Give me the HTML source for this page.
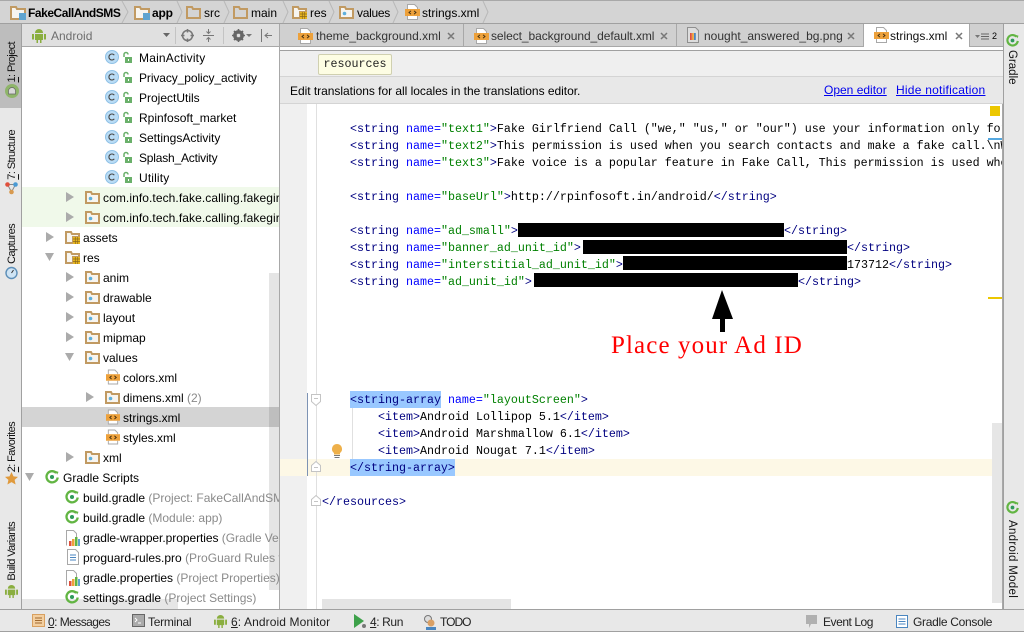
<!DOCTYPE html>
<html><head><meta charset="utf-8"><style>
html,body{margin:0;padding:0;width:1024px;height:633px;overflow:hidden;background:#fff}
body{position:relative;font-family:"Liberation Sans",sans-serif;font-size:12px;color:#000}
.a,.t,.b,svg.i{position:absolute}
.t{white-space:nowrap;line-height:20px;height:20px}
.r{margin-top:1px}
.g{color:#8a8a8a}
.b{white-space:nowrap;line-height:20px;height:20px;font-size:12px;color:#222}
.v{position:absolute;writing-mode:vertical-rl;transform:rotate(180deg);white-space:nowrap;font-size:11px;line-height:14px;letter-spacing:-.6px;color:#111}
.vr{position:absolute;writing-mode:vertical-rl;white-space:nowrap;font-size:11.5px;line-height:14px;color:#111}
svg.i{overflow:visible}
.l{position:absolute;left:350px;height:17px;line-height:17px;white-space:pre;font-family:"Liberation Mono",monospace;font-size:11.67px;color:#000}
.n{color:#000080}.c{color:#0000ff}.s{color:#008000}
.k{position:absolute;background:#000}
</style></head><body>
<svg width="0" height="0" style="position:absolute"><defs>
<symbol id="fo" viewBox="0 0 15 13"><path d="M1 12V1h5l1 2h7v9z" fill="#f7f5f0" stroke="#c19a62" stroke-width="2"/><circle cx="5.500" cy="7.500" r="1.800" fill="#5fb0dc"/></symbol>
<symbol id="fr" viewBox="0 0 15 13"><path d="M1 12V1h5l1 2h7v3H8v6z" fill="#f7f5f0" stroke="#c19a62" stroke-width="2"/><path d="M8 6h7v7H8z" fill="#e9b61f"/><path d="M8 8h7M8 10.500h7M10.300 6v7M12.700 6v7" stroke="#8a6a1a" stroke-width=".7"/></symbol>
<symbol id="fp" viewBox="0 0 16 14"><path d="M1 13V1h5l1 2h8v10z" fill="#f7f5f0" stroke="#c19a62" stroke-width="2"/><path d="M9 7h7v7H9z" fill="#5fa4d0"/></symbol>
<symbol id="fe" viewBox="0 0 15 13"><path d="M1 12V1h5l1 2h7v9z" fill="none" stroke="#c19a62" stroke-width="2"/></symbol>
<symbol id="x" viewBox="0 0 15 16"><path d="M2.500 5V.5h7l3 3V5M2.500 12v3.500h10V12" fill="#fff" stroke="#a8a8a8"/><path d="M0 5h15v7H0z" fill="#eda13b"/><path d="M6 6.800L4 8.500l2 1.700M9 6.800l2 1.700-2 1.700" fill="none" stroke="#3b2a10" stroke-width=".9"/></symbol>
<symbol id="cl" viewBox="0 0 28 15"><circle cx="7" cy="7" r="6.500" fill="#b9dcf5" stroke="#8fc1e6"/><path d="M9.300 5.200A3 3 0 1 0 9.300 8.800" fill="none" stroke="#444" stroke-width="1.100"/><path d="M19 7V4.500a2 2 0 0 1 4 0" fill="none" stroke="#6ab06a" stroke-width="1.500"/><path d="M20 7h7v6h-7z" fill="#6ab06a"/><path d="M23 9h1v2h-1z" fill="#fff"/></symbol>
<symbol id="gr" viewBox="0 0 15 15"><path d="M12 3.100A6 6 0 1 0 13.600 8" fill="none" stroke="#62b543" stroke-width="2.500"/><circle cx="7.500" cy="7.500" r="2.200" fill="#2f9a5a"/><path d="M11 1l3.500 1-1.500 3z" fill="#62b543"/></symbol>
<symbol id="an" viewBox="0 0 14 15"><path d="M3 5a4 4 0 0 1 8 0z" fill="#8aae3f"/><path d="M3 6h8v6h-1.500v3h-1.500v-3H6v3H4.500v-3H3zM0 6h2v5.500H0zM12 6h2v5.500h-2z" fill="#8aae3f"/></symbol>
<symbol id="ch" viewBox="0 0 14 16"><path d="M.5 15.500V.5h7l3 3V7" fill="#fff" stroke="#a8a8a8"/><path d="M3 11h2.500v5H3z" fill="#e0503c"/><path d="M6 9h2.500v7H6z" fill="#eda13b"/><path d="M9 7h2.500v9H9z" fill="#62b543"/><path d="M12 9h2v7h-2z" fill="#5fa4d0"/></symbol>
<symbol id="tx" viewBox="0 0 12 16"><path d="M.5.500h8l3 3v12H.5z" fill="#fff" stroke="#a8a8a8"/><path d="M3 6h6M3 8.500h6M3 11h6" stroke="#4a86c0"/></symbol>
</defs></svg>

<!-- breadcrumb -->
<div class="a" style="left:0;top:0;width:1024px;height:24px;background:#d4d4d4;border-top:1px solid #a8a8a8;box-sizing:border-box"></div>
<div class="a" style="left:0;top:23px;width:1024px;height:1px;background:#a0a0a0"></div>
<svg class="i" style="left:10px;top:6px" width="16" height="14"><use href="#fp"/></svg>
<div class="t" style="left:28px;top:3px;font-weight:bold;letter-spacing:-.45px">FakeCallAndSMS</div>
<svg class="i" style="left:134px;top:6px" width="16" height="14"><use href="#fp"/></svg>
<div class="t" style="left:152px;top:3px;font-weight:bold;letter-spacing:-.2px">app</div>
<svg class="i" style="left:186px;top:6px" width="15" height="13"><use href="#fe"/></svg>
<div class="t" style="left:204px;top:3px">src</div>
<svg class="i" style="left:233px;top:6px" width="15" height="13"><use href="#fe"/></svg>
<div class="t" style="left:251px;top:3px">main</div>
<svg class="i" style="left:292px;top:6px" width="15" height="13"><use href="#fr"/></svg>
<div class="t" style="left:310px;top:3px">res</div>
<svg class="i" style="left:339px;top:6px" width="15" height="13"><use href="#fo"/></svg>
<div class="t" style="left:357px;top:3px;letter-spacing:-.3px">values</div>
<svg class="i" style="left:405px;top:4px" width="15" height="16"><use href="#x"/></svg>
<div class="t" style="left:422px;top:3px">strings.xml</div>
<svg class="i" style="left:0;top:1px" width="500" height="22" fill="none" stroke="#b8b8b8"><path d="M122 0l6 11-6 11M177 0l5 11-5 11M224 0l5 11-5 11M283 0l5 11-5 11M329 0l5 11-5 11M393 0l5 11-5 11M483 0l5 11-5 11"/></svg>

<!-- left stripe -->
<div class="a" style="left:0;top:24px;width:22px;height:585px;background:#e8e8e8;border-right:1px solid #a0a0a0;box-sizing:border-box"></div>
<div class="a" style="left:0;top:24px;width:21px;height:84px;background:#bdbdbd"></div>
<div class="v" style="left:5px;top:42px"><u>1</u>: Project</div>
<svg class="i" style="left:5px;top:84px" width="14" height="14"><circle cx="7" cy="7" r="7" fill="#8fb56a"/><path d="M3.500 10V7a3.500 3.500 0 0 1 7 0v3z" fill="#d8d8d8" stroke="#666" stroke-width=".7"/></svg>
<div class="v" style="left:5px;top:130px"><u>7</u>: Structure</div>
<svg class="i" style="left:5px;top:182px" width="13" height="13"><path d="M2.500 2.500L6.500 10 10.500 2.500z" fill="none" stroke="#888"/><circle cx="2.500" cy="2.500" r="2.300" fill="#e0503c"/><circle cx="10.500" cy="2.500" r="2.300" fill="#4a9ad4"/><circle cx="6.500" cy="10" r="2.300" fill="#d89a50"/></svg>
<div class="v" style="left:5px;top:224px">Captures</div>
<svg class="i" style="left:5px;top:266px" width="13" height="13"><circle cx="6.500" cy="7" r="5.500" fill="#cfe4f4" stroke="#5d8fb8" stroke-width="1.400"/><path d="M6.500 7l2-3" stroke="#333"/></svg>
<div class="v" style="left:5px;top:422px"><u>2</u>: Favorites</div>
<svg class="i" style="left:5px;top:472px" width="13" height="13"><path d="M6.500 0l2 4.400 4.500.5-3.400 3 1 4.600-4.100-2.400-4.100 2.400 1-4.600L0 4.900l4.500-.5z" fill="#e09a3c"/></svg>
<div class="v" style="left:5px;top:522px">Build Variants</div>
<svg class="i" style="left:5px;top:584px" width="13" height="14"><use href="#an"/></svg>

<!-- project toolbar -->
<div class="a" style="left:22px;top:24px;width:258px;height:23px;background:#e0e0e0;border-bottom:1px solid #a8a8a8;box-sizing:border-box"></div>
<svg class="i" style="left:32px;top:28px" width="14" height="15"><use href="#an"/></svg>
<div class="t" style="left:51px;top:26px;color:#6e6e6e">Android</div>
<svg class="i" style="left:163px;top:33px" width="8" height="5"><path d="M0 0h7L3.500 4z" fill="#666"/></svg>
<div class="a" style="left:175px;top:27px;width:1px;height:17px;background:#c4c4c4"></div>
<svg class="i" style="left:181px;top:29px" width="13" height="13" fill="none" stroke="#777" stroke-width="1.500"><circle cx="6.500" cy="6.500" r="5"/><path d="M6.500 0v3.500M6.500 9.500V13M0 6.500h3.500M9.500 6.500H13"/></svg>
<svg class="i" style="left:203px;top:29px" width="11" height="13" fill="none" stroke="#777"><path d="M0 6.500h11M5.500 0v4M3.500 2.500l2 2 2-2M5.500 13V9M3.500 10.500l2-2 2 2"/></svg>
<div class="a" style="left:223px;top:27px;width:1px;height:17px;background:#c4c4c4"></div>
<svg class="i" style="left:232px;top:29px" width="13" height="13"><circle cx="6.500" cy="6.500" r="4" fill="none" stroke="#666" stroke-width="2.800"/><path d="M6.500 0v13M0 6.500h13M2 2l9 9M11 2l-9 9" stroke="#666" stroke-width="1.600"/><circle cx="6.500" cy="6.500" r="1.700" fill="#e0e0e0"/></svg>
<svg class="i" style="left:246px;top:34px" width="6" height="4"><path d="M0 0h6L3 3z" fill="#777"/></svg>
<svg class="i" style="left:260px;top:29px" width="13" height="13" fill="none" stroke="#777"><path d="M1.500 0v13M12 6.500H5M8 4L5 6.500 8 9" /></svg>

<!-- tabs -->
<div class="a" style="left:280px;top:24px;width:723px;height:22px;background:#d0d0d0"></div>
<div class="a" style="left:280px;top:46px;width:723px;height:1px;background:#a8a8a8"></div>
<div class="a" style="left:280px;top:47px;width:723px;height:3px;background:#fff"></div>
<div class="a" style="left:280px;top:50px;width:723px;height:1px;background:#a0a0a0"></div>
<div class="a" style="left:279px;top:24px;width:1px;height:26px;background:#a8a8a8"></div>
<div class="a" style="left:463px;top:24px;width:1px;height:23px;background:#a8a8a8"></div>
<div class="a" style="left:676px;top:24px;width:1px;height:23px;background:#a8a8a8"></div>
<div class="a" style="left:863px;top:24px;width:107px;height:23px;background:#fff;border-left:1px solid #a8a8a8;border-right:1px solid #a8a8a8;box-sizing:border-box"></div>
<svg class="i" style="left:298px;top:28px" width="15" height="16"><use href="#x"/></svg>
<div class="t" style="left:316px;top:26px;color:#333">theme_background.xml</div>
<svg class="i" style="left:474px;top:28px" width="15" height="16"><use href="#x"/></svg>
<div class="t" style="left:491px;top:26px;color:#333;letter-spacing:-.07px">select_background_default.xml</div>
<svg class="i" style="left:687px;top:27px" width="12" height="16"><path d="M.5.500h8l3 3v12H.5z" fill="#ddd" stroke="#8f8f8f"/><path d="M3 6h1.800v7H3z" fill="#e0503c"/><path d="M5 6h1.800v7H5z" fill="#eda13b"/><path d="M7 6h1.800v7H7z" fill="#4a86c0"/></svg>
<div class="t" style="left:704px;top:26px;color:#333">nought_answered_bg.png</div>
<svg class="i" style="left:874px;top:27px" width="15" height="16"><use href="#x"/></svg>
<div class="t" style="left:890px;top:26px;color:#111">strings.xml</div>
<svg class="i" style="left:0;top:0" width="1024" height="50" fill="none" stroke="#777" stroke-width="1.500"><path d="M448 33l6 6M454 33l-6 6M661 33l6 6M667 33l-6 6M848 33l6 6M854 33l-6 6M956 33l6 6M962 33l-6 6"/></svg>
<svg class="i" style="left:975px;top:33px" width="22" height="8"><path d="M0 2h5L2.500 5z" fill="#777"/><path d="M6 1h8M6 3.500h8M6 6h8" stroke="#666"/></svg>
<div class="a" style="left:992px;top:29px;font-size:9px;line-height:14px">2</div>

<!-- right stripe -->
<div class="a" style="left:1003px;top:24px;width:21px;height:585px;background:#e8e8e8;border-left:1px solid #a0a0a0;box-sizing:border-box"></div>
<svg class="i" style="left:1006px;top:34px" width="13" height="13"><use href="#gr"/></svg>
<div class="vr" style="left:1005px;top:50px">Gradle</div>
<svg class="i" style="left:1006px;top:501px" width="13" height="13"><use href="#gr"/></svg>
<div class="vr" style="left:1005px;top:520px;letter-spacing:.3px">Android Model</div>

<!-- tree -->
<div class="a" style="left:22px;top:187px;width:258px;height:40px;background:#f0f9ea"></div>
<div class="a" style="left:22px;top:407px;width:258px;height:20px;background:#d4d4d4"></div>
<div class="a" style="left:279px;top:47px;width:1px;height:562px;background:#a8a8a8"></div>
<div class="a" style="left:269px;top:273px;width:10px;height:317px;background:rgba(0,0,0,.1)"></div>
<div class="a" style="left:22px;top:599px;width:156px;height:10px;background:#e6e6e6"></div>

<svg class="i" style="left:105px;top:50px" width="28" height="15"><use href="#cl"/></svg><div class="t r" style="left:139px;top:47px;letter-spacing:.2px">MainActivity</div>
<svg class="i" style="left:105px;top:70px" width="28" height="15"><use href="#cl"/></svg><div class="t r" style="left:139px;top:67px;letter-spacing:-.09px">Privacy_policy_activity</div>
<svg class="i" style="left:105px;top:90px" width="28" height="15"><use href="#cl"/></svg><div class="t r" style="left:139px;top:87px">ProjectUtils</div>
<svg class="i" style="left:105px;top:110px" width="28" height="15"><use href="#cl"/></svg><div class="t r" style="left:139px;top:107px">Rpinfosoft_market</div>
<svg class="i" style="left:105px;top:130px" width="28" height="15"><use href="#cl"/></svg><div class="t r" style="left:139px;top:127px">SettingsActivity</div>
<svg class="i" style="left:105px;top:150px" width="28" height="15"><use href="#cl"/></svg><div class="t r" style="left:139px;top:147px;letter-spacing:-.2px">Splash_Activity</div>
<svg class="i" style="left:105px;top:170px" width="28" height="15"><use href="#cl"/></svg><div class="t r" style="left:139px;top:167px;letter-spacing:.15px">Utility</div>

<div class="a" style="left:22px;top:187px;width:257px;height:41px;overflow:hidden">
<div class="t r" style="left:81px;top:0;letter-spacing:.08px">com.info.tech.fake.calling.fakegirlfriend</div>
<div class="t r" style="left:81px;top:20px;letter-spacing:.08px">com.info.tech.fake.calling.fakegirlfriend</div>
</div>
<svg class="i" style="left:85px;top:191px" width="15" height="13"><use href="#fo"/></svg>
<svg class="i" style="left:85px;top:211px" width="15" height="13"><use href="#fo"/></svg>

<svg class="i" style="left:65px;top:231px" width="15" height="13"><use href="#fr"/></svg><div class="t r" style="left:83px;top:227px">assets</div>
<svg class="i" style="left:65px;top:251px" width="15" height="13"><use href="#fr"/></svg><div class="t r" style="left:83px;top:247px">res</div>
<svg class="i" style="left:85px;top:271px" width="15" height="13"><use href="#fo"/></svg><div class="t r" style="left:103px;top:267px">anim</div>
<svg class="i" style="left:85px;top:291px" width="15" height="13"><use href="#fo"/></svg><div class="t r" style="left:103px;top:287px">drawable</div>
<svg class="i" style="left:85px;top:311px" width="15" height="13"><use href="#fo"/></svg><div class="t r" style="left:103px;top:307px">layout</div>
<svg class="i" style="left:85px;top:331px" width="15" height="13"><use href="#fo"/></svg><div class="t r" style="left:103px;top:327px">mipmap</div>
<svg class="i" style="left:85px;top:351px" width="15" height="13"><use href="#fo"/></svg><div class="t r" style="left:103px;top:347px">values</div>
<svg class="i" style="left:106px;top:369px" width="14" height="16"><use href="#x"/></svg><div class="t r" style="left:123px;top:367px">colors.xml</div>
<svg class="i" style="left:105px;top:391px" width="15" height="13"><use href="#fo"/></svg><div class="t r" style="left:123px;top:387px">dimens.xml <span class="g">(2)</span></div>
<svg class="i" style="left:106px;top:409px" width="14" height="16"><use href="#x"/></svg><div class="t r" style="left:123px;top:407px">strings.xml</div>
<svg class="i" style="left:106px;top:429px" width="14" height="16"><use href="#x"/></svg><div class="t r" style="left:123px;top:427px">styles.xml</div>
<svg class="i" style="left:85px;top:451px" width="15" height="13"><use href="#fo"/></svg><div class="t r" style="left:103px;top:447px">xml</div>
<svg class="i" style="left:45px;top:470px" width="14" height="14"><use href="#gr"/></svg><div class="t r" style="left:63px;top:467px">Gradle Scripts</div>
<svg class="i" style="left:65px;top:490px" width="14" height="14"><use href="#gr"/></svg>
<div class="a" style="left:83px;top:487px;width:196px;height:21px;overflow:hidden"><div class="t r" style="left:0;top:0">build.gradle <span class="g">(Project: FakeCallAndSMS)</span></div></div>
<svg class="i" style="left:65px;top:510px" width="14" height="14"><use href="#gr"/></svg><div class="t r" style="left:83px;top:507px">build.gradle <span class="g">(Module: app)</span></div>
<svg class="i" style="left:66px;top:530px" width="14" height="16"><use href="#ch"/></svg>
<div class="a" style="left:83px;top:527px;width:196px;height:21px;overflow:hidden"><div class="t r" style="left:0;top:0;letter-spacing:-.05px">gradle-wrapper.properties <span class="g">(Gradle Version)</span></div></div>
<svg class="i" style="left:67px;top:549px" width="12" height="16"><use href="#tx"/></svg>
<div class="a" style="left:83px;top:547px;width:196px;height:21px;overflow:hidden"><div class="t r" style="left:0;top:0">proguard-rules.pro <span class="g">(ProGuard Rules for app)</span></div></div>
<svg class="i" style="left:66px;top:570px" width="14" height="16"><use href="#ch"/></svg><div class="t r" style="left:83px;top:567px">gradle.properties <span class="g">(Project Properties)</span></div>
<svg class="i" style="left:65px;top:590px" width="14" height="14"><use href="#gr"/></svg><div class="t r" style="left:83px;top:587px">settings.gradle <span class="g">(Project Settings)</span></div>

<svg class="i" style="left:0;top:0" width="280" height="500" fill="#ababab"><path d="M66 192l8 5-8 5zM66 212l8 5-8 5zM46 232l8 5-8 5zM45 253l9 0-4.500 8zM66 272l8 5-8 5zM66 292l8 5-8 5zM66 312l8 5-8 5zM66 332l8 5-8 5zM65 353l9 0-4.500 8zM86 392l8 5-8 5zM66 452l8 5-8 5zM25 473l9 0-4.500 8z"/></svg>

<!-- editor header -->
<div class="a" style="left:280px;top:51px;width:723px;height:25px;background:#efefef"></div>
<div class="a" style="left:318px;top:54px;width:74px;height:21px;background:#fdfde3;border:1px solid #d0d0b0;border-radius:2px;box-sizing:border-box;font-family:'Liberation Mono',monospace;font-size:11.67px;line-height:19px;text-align:center;color:#222">resources</div>
<div class="a" style="left:280px;top:76px;width:723px;height:28px;background:#e8e8e8;border-top:1px solid #d4d4d4;border-bottom:1px solid #d4d4d4;box-sizing:border-box"></div>
<div class="t" style="left:290px;top:81px;margin-top:0;letter-spacing:-.03px">Edit translations for all locales in the translations editor.</div>
<div class="t" style="left:824px;top:80px;color:#0000ee;text-decoration:underline">Open editor</div>
<div class="t" style="left:896px;top:80px;color:#0000ee;text-decoration:underline;letter-spacing:.24px">Hide notification</div>

<!-- editor -->
<div class="a" style="left:280px;top:104px;width:27px;height:505px;background:#f0f0f0"></div>
<div class="a" style="left:280px;top:459px;width:723px;height:17px;background:#fdf8e6"></div>
<div class="a" style="left:307px;top:393px;width:1px;height:83px;background:#7d93b4"></div>
<div class="a" style="left:316px;top:104px;width:1px;height:505px;background:#e0e0e0"></div>
<div class="a" style="left:352px;top:408px;width:1px;height:51px;background:#e0e0e0"></div>
<div class="a" style="left:350px;top:391px;width:91px;height:17px;background:#99c8ff"></div>
<div class="a" style="left:350px;top:459px;width:105px;height:17px;background:#99c8ff"></div>

<div class="a" style="left:280px;top:104px;width:722px;height:505px;overflow:hidden">
<div style="position:absolute;left:-280px;top:-103px;width:1024px;height:633px">
<div class="l" style="top:120px"><span class="n">&lt;string</span> <span class="c">name=</span><span class="s">"text1"</span><span class="n">&gt;</span>Fake Girlfriend Call ("we," "us," or "our") use your information only for</div>
<div class="l" style="top:137px"><span class="n">&lt;string</span> <span class="c">name=</span><span class="s">"text2"</span><span class="n">&gt;</span>This permission is used when you search contacts and make a fake call.\nW</div>
<div class="l" style="top:154px"><span class="n">&lt;string</span> <span class="c">name=</span><span class="s">"text3"</span><span class="n">&gt;</span>Fake voice is a popular feature in Fake Call, This permission is used whe</div>
<div class="l" style="top:188px"><span class="n">&lt;string</span> <span class="c">name=</span><span class="s">"baseUrl"</span><span class="n">&gt;</span>http://rpinfosoft.in/android/<span class="n">&lt;/string&gt;</span></div>
<div class="l" style="top:222px"><span class="n">&lt;string</span> <span class="c">name=</span><span class="s">"ad_small"</span><span class="n">&gt;</span></div>
<div class="l" style="top:222px;left:784px"><span class="n">&lt;/string&gt;</span></div>
<div class="l" style="top:239px"><span class="n">&lt;string</span> <span class="c">name=</span><span class="s">"banner_ad_unit_id"</span><span class="n">&gt;</span></div>
<div class="l" style="top:239px;left:847px"><span class="n">&lt;/string&gt;</span></div>
<div class="l" style="top:256px"><span class="n">&lt;string</span> <span class="c">name=</span><span class="s">"interstitial_ad_unit_id"</span><span class="n">&gt;</span></div>
<div class="l" style="top:256px;left:847px">173712<span class="n">&lt;/string&gt;</span></div>
<div class="l" style="top:273px"><span class="n">&lt;string</span> <span class="c">name=</span><span class="s">"ad_unit_id"</span><span class="n">&gt;</span></div>
<div class="l" style="top:273px;left:798px"><span class="n">&lt;/string&gt;</span></div>
<div class="l" style="top:391px"><span class="n">&lt;string-array</span> <span class="c">name=</span><span class="s">"layoutScreen"</span><span class="n">&gt;</span></div>
<div class="l" style="top:408px;left:378px"><span class="n">&lt;item&gt;</span>Android Lollipop 5.1<span class="n">&lt;/item&gt;</span></div>
<div class="l" style="top:425px;left:378px"><span class="n">&lt;item&gt;</span>Android Marshmallow 6.1<span class="n">&lt;/item&gt;</span></div>
<div class="l" style="top:442px;left:378px"><span class="n">&lt;item&gt;</span>Android Nougat 7.1<span class="n">&lt;/item&gt;</span></div>
<div class="l" style="top:459px"><span class="n">&lt;/string-array&gt;</span></div>
<div class="l" style="top:493px;left:322px"><span class="n">&lt;/resources&gt;</span></div>
</div></div>

<div class="k" style="left:518px;top:223px;width:266px;height:14px"></div>
<div class="k" style="left:583px;top:240px;width:264px;height:14px"></div>
<div class="k" style="left:623px;top:256px;width:224px;height:14px"></div>
<div class="k" style="left:534px;top:273px;width:264px;height:14px"></div>
<svg class="i" style="left:700px;top:285px" width="50" height="50"><path d="M22 5l11 29H25v13h-5V34h-8z" fill="#000"/></svg>
<div class="a" style="left:611px;top:331px;font-family:'Liberation Serif',serif;font-size:25px;line-height:30px;color:#f00;white-space:nowrap;letter-spacing:1.1px">Place your Ad ID</div>

<!-- fold marks -->
<svg class="i" style="left:311px;top:394px" width="12" height="116" fill="#fff" stroke="#c4c4c4"><path d="M.5.500h9v7l-4.500 4-4.500-4z"/><path d="M3 4.500h4"/><path d="M.5 77.500v-6l4.500-4 4.500 4v6zM3 73.500h4M.5 111.500v-6l4.500-4 4.500 4v6zM3 107.500h4"/></svg>
<svg class="i" style="left:331px;top:444px" width="12" height="15"><path d="M6 0a5 5 0 0 1 3 9v1.500H3V9a5 5 0 0 1 3-9z" fill="#eeb04a"/><path d="M3 11.500h6M3.500 13.500h5" stroke="#777"/></svg>

<!-- scroll marks -->
<div class="a" style="left:990px;top:106px;width:10px;height:10px;background:#ecc700"></div>
<div class="a" style="left:988px;top:138px;width:14px;height:2px;background:#55a8e0"></div>
<div class="a" style="left:988px;top:297px;width:14px;height:2px;background:#ecc700"></div>
<div class="a" style="left:992px;top:423px;width:10px;height:180px;background:#e6e6e6"></div>
<div class="a" style="left:322px;top:599px;width:189px;height:10px;background:#e4e4e4"></div>
<div class="a" style="left:1002px;top:104px;width:1px;height:505px;background:#a8a8a8"></div>

<!-- bottom bar -->
<div class="a" style="left:0;top:609px;width:1024px;height:23px;background:#e8e8e8;border-top:1px solid #a0a0a0;border-bottom:1px solid #a0a0a0;box-sizing:border-box"></div>
<svg class="i" style="left:32px;top:614px" width="13" height="13"><path d="M.5.500h12v12H.5z" fill="#f3cfa0" stroke="#d8a060"/><path d="M3 4h7M3 6.500h7M3 9h7" stroke="#a06a30"/></svg>
<div class="b" style="left:48px;top:612px;letter-spacing:-.55px"><u>0</u>: Messages</div>
<svg class="i" style="left:132px;top:614px" width="13" height="13"><path d="M.5.500h12v12H.5z" fill="#aaa" stroke="#666"/><path d="M3 4l2 2-2 2M6 9h3" stroke="#fff" fill="none"/></svg>
<div class="b" style="left:148px;top:612px;letter-spacing:-.25px">Terminal</div>
<svg class="i" style="left:214px;top:614px" width="13" height="14"><use href="#an"/></svg>
<div class="b" style="left:231px;top:612px;letter-spacing:.1px"><u>6</u>: Android Monitor</div>
<svg class="i" style="left:354px;top:614px" width="12" height="15"><path d="M0 0l10 7-10 7z" fill="#3da14a"/><circle cx="10" cy="12" r="2" fill="#777"/></svg>
<div class="b" style="left:370px;top:612px;letter-spacing:-.4px"><u>4</u>: Run</div>
<svg class="i" style="left:423px;top:615px" width="14" height="15"><circle cx="5" cy="4" r="3.500" fill="#ddd" stroke="#777"/><circle cx="8" cy="8" r="3.500" fill="#d9a066"/><path d="M3 12h10v3H3z" fill="#4a86c0"/></svg>
<div class="b" style="left:440px;top:612px;letter-spacing:-1px">TODO</div>
<svg class="i" style="left:805px;top:615px" width="13" height="14"><path d="M1 0h11v9H6l-2 4V9H1z" fill="#b0b0b0"/></svg>
<div class="b" style="left:823px;top:612px;letter-spacing:-.45px">Event Log</div>
<svg class="i" style="left:896px;top:615px" width="12" height="13"><path d="M.5.500h11v12H.5z" fill="#fff" stroke="#4a86c0"/><path d="M2.500 4h7M2.500 6.500h7M2.500 9h7" stroke="#4a86c0"/></svg>
<div class="b" style="left:913px;top:612px;letter-spacing:-.3px">Gradle Console</div>
</body></html>
